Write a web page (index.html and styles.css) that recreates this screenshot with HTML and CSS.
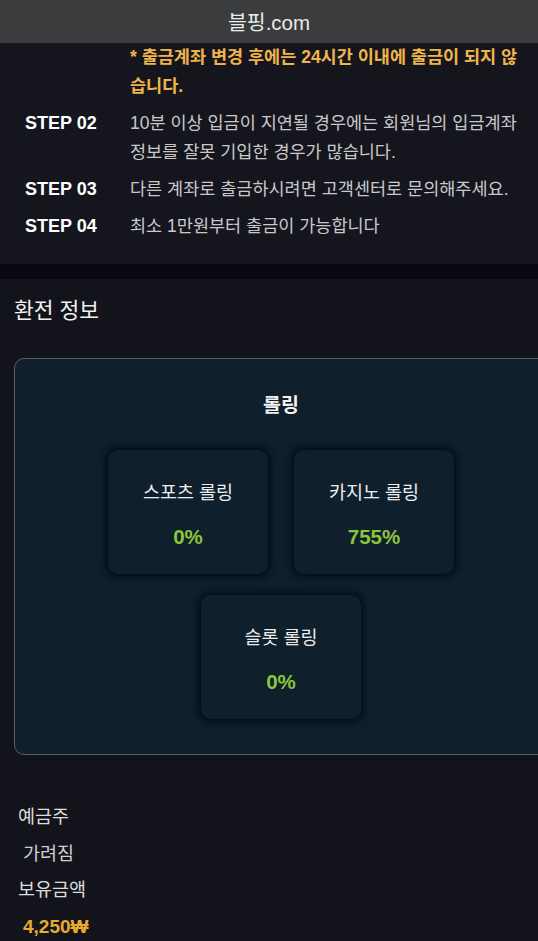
FILE: index.html
```html
<!DOCTYPE html>
<html lang="ko">
<head>
<meta charset="utf-8">
<title>블핑.com</title>
<link rel="stylesheet" href="styles.css">
</head>
<body>
<header class="urlbar">블핑.com</header>
<section class="notice">
  <div class="row">
    <div class="label"></div>
    <div class="text warn">* 출금계좌 변경 후에는 24시간 이내에 출금이 되지 않습니다.</div>
  </div>
  <div class="row">
    <div class="label">STEP 02</div>
    <div class="text">10분 이상 입금이 지연될 경우에는 회원님의 입금계좌 정보를 잘못 기입한 경우가 많습니다.</div>
  </div>
  <div class="row">
    <div class="label">STEP 03</div>
    <div class="text">다른 계좌로 출금하시려면 고객센터로 문의해주세요.</div>
  </div>
  <div class="row">
    <div class="label">STEP 04</div>
    <div class="text">최소 1만원부터 출금이 가능합니다</div>
  </div>
</section>
<div class="strip"></div>
<section class="exchange">
  <h2 class="title">환전 정보</h2>
  <div class="card">
    <div class="card-title">롤링</div>
    <div class="boxes">
      <div class="box"><div class="box-label">스포츠 롤링</div><div class="box-value">0%</div></div>
      <div class="box"><div class="box-label">카지노 롤링</div><div class="box-value">755%</div></div>
      <div class="box"><div class="box-label">슬롯 롤링</div><div class="box-value">0%</div></div>
    </div>
  </div>
  <div class="info">
    <div class="info-label">예금주</div>
    <div class="info-value">가려짐</div>
    <div class="info-label">보유금액</div>
    <div class="info-value amount">4,250₩</div>
  </div>
</section>
</body>
</html>
```
FILE: styles.css
```css
html, body {
  margin: 0;
  padding: 0;
}
body {
  width: 538px;
  height: 941px;
  overflow: hidden;
  background: #13141b;
  font-family: "Liberation Sans", "Noto Sans CJK KR", sans-serif;
  color: #e6e6e6;
}
.urlbar {
  height: 43px;
  background: #3b3c3e;
  color: #ececec;
  font-size: 20.5px;
  line-height: 45px;
  text-align: center;
}
.notice {
  background: #15161d;
  padding: 0 16px 23px 25px;
  display: flex;
  flex-direction: column;
  gap: 8px;
}
.row {
  display: flex;
}
.label {
  width: 105px;
  flex: none;
  font-size: 18px;
  font-weight: bold;
  line-height: 29px;
  color: #ffffff;
}
.text {
  flex: 1;
  font-size: 17.5px;
  line-height: 29px;
  color: #c9c9cc;
}
.text.warn {
  color: #f0b54a;
  font-weight: bold;
}
.strip {
  height: 15px;
  background: #08090e;
}
.title {
  margin: 0;
  padding: 18px 0 0 14px;
  height: 61px;
  font-size: 21.5px;
  font-weight: normal;
  line-height: 28px;
  color: #f0f0f0;
}
.card {
  margin-left: 14px;
  width: 532px;
  height: 395px;
  border: 1px solid #5a5f66;
  border-radius: 10px;
  background: #0f1f2c;
  display: flex;
  flex-direction: column;
  align-items: center;
}
.card-title {
  margin-top: 33px;
  font-size: 19.5px;
  font-weight: bold;
  line-height: 26px;
  color: #f2f2f2;
}
.boxes {
  margin-top: 32px;
  width: 360px;
  display: flex;
  flex-wrap: wrap;
  justify-content: center;
  column-gap: 26px;
  row-gap: 21px;
}
.box {
  width: 160px;
  height: 124px;
  border-radius: 10px;
  background: #0f1f2c;
  box-shadow: 0 0 6px 3px rgba(3, 10, 16, 0.8);
  display: flex;
  flex-direction: column;
  align-items: center;
}
.box-label {
  margin-top: 30px;
  font-size: 18.5px;
  line-height: 26px;
  color: #ececec;
}
.box-value {
  margin-top: 18px;
  font-size: 20.5px;
  font-weight: bold;
  line-height: 26px;
  color: #8cc43c;
}
.info {
  padding: 44px 0 0 18px;
  display: flex;
  flex-direction: column;
}
.info-label {
  font-size: 18.5px;
  line-height: 36.5px;
  color: #dcdcdc;
}
.info-value {
  font-size: 18.5px;
  line-height: 36.5px;
  padding-left: 5px;
  color: #cfcfcf;
}
.info-value.amount {
  font-size: 19px;
  color: #e8aa30;
  font-weight: bold;
}
```
